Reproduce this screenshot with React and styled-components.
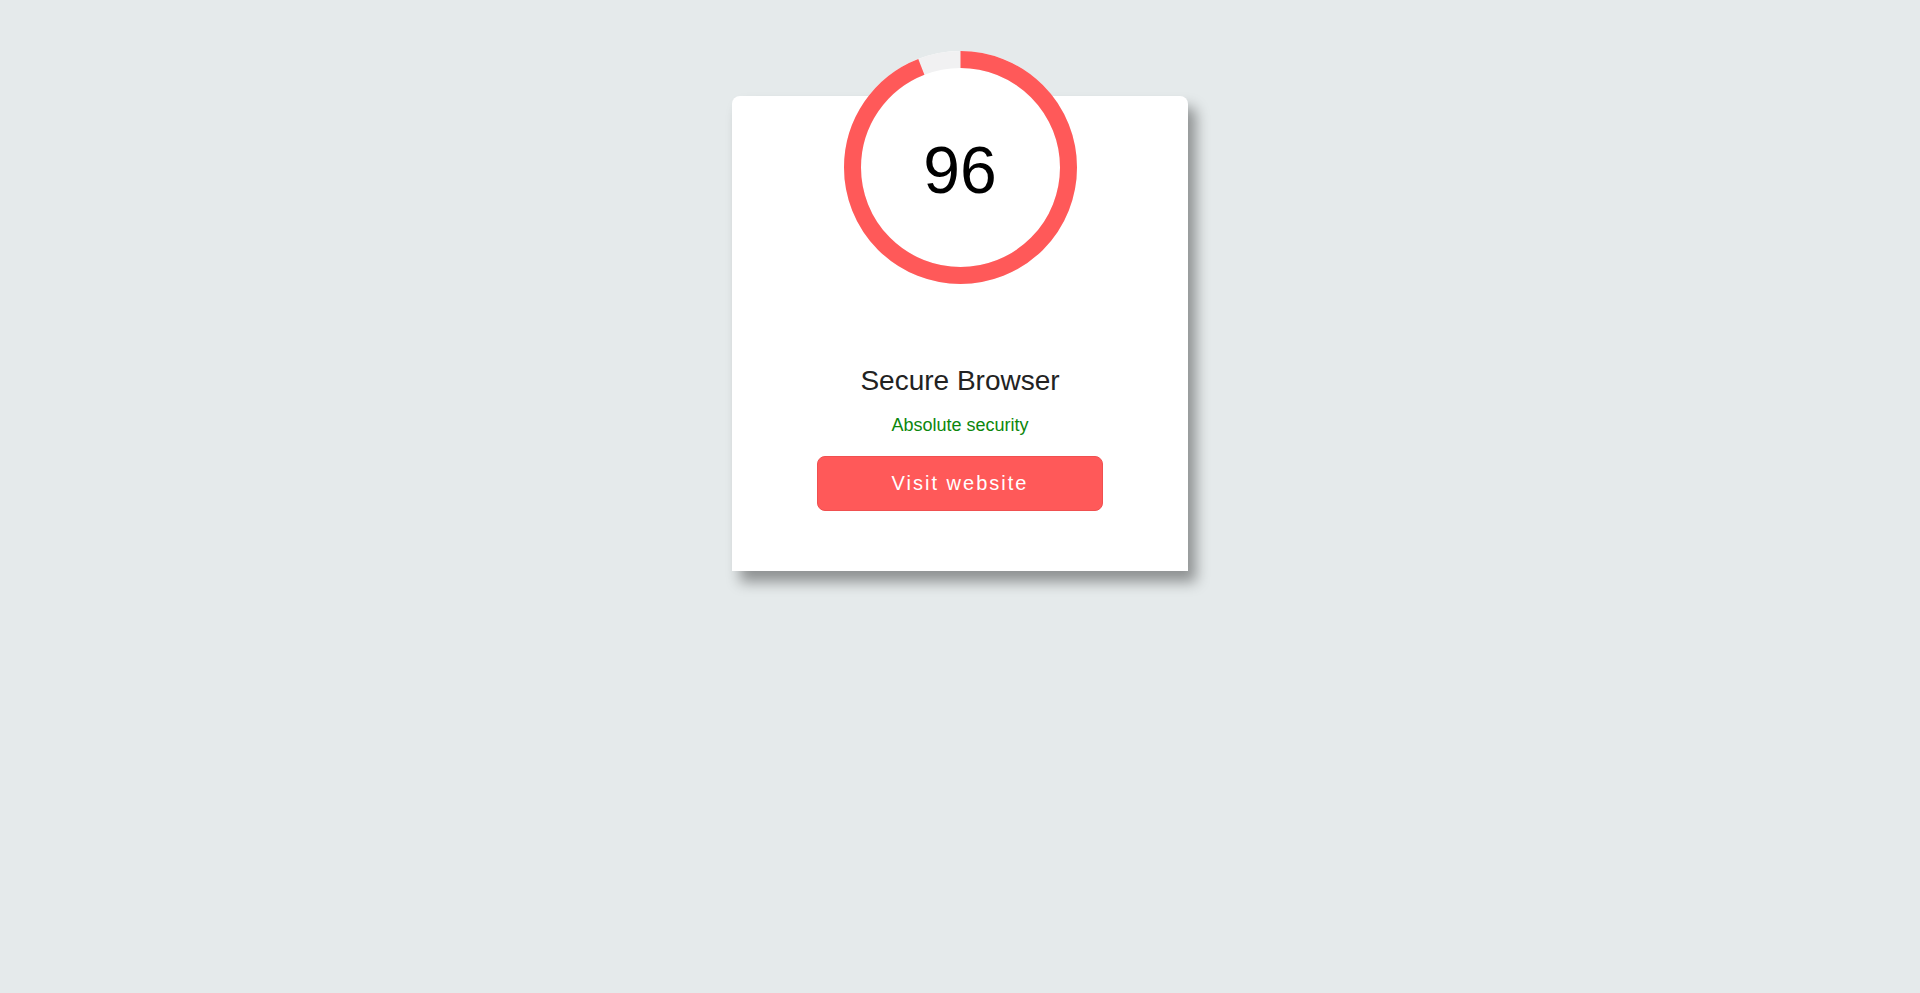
import React from 'react'
import styled, { createGlobalStyle } from 'styled-components'

const GlobalStyle = createGlobalStyle`
  html, body {
    margin: 0;
    padding: 0;
    background: #e5eaeb;
    font-family: "Liberation Sans", Arial, sans-serif;
  }
`;

const SIZE = 233;
const STROKE = 17;
const R = (SIZE - STROKE) / 2;
const C = 2 * Math.PI * R;

// the arc is drawn a little shorter than the score, as in the original widget
const arcFor = (value) => (C * (value - 2)) / 100;

const Gauge = ({ value }) => (
  <GaugeWrap>
    <svg width={SIZE} height={SIZE} viewBox={`0 0 ${SIZE} ${SIZE}`}>
      <circle cx={SIZE / 2} cy={SIZE / 2} r={R + STROKE / 2} fill="#fff" />
      <circle cx={SIZE / 2} cy={SIZE / 2} r={R} fill="none" stroke="#f1f1f2" strokeWidth={STROKE} />
      <circle
        cx={SIZE / 2}
        cy={SIZE / 2}
        r={R}
        fill="none"
        stroke="#ff5959"
        strokeWidth={STROKE}
        strokeDasharray={`${arcFor(value)} ${C}`}
        transform={`rotate(-90 ${SIZE / 2} ${SIZE / 2})`}
      />
    </svg>
    <Score>{value}</Score>
  </GaugeWrap>
);

const App = () => {
  return (
    <Page>
      <GlobalStyle />
      <Card>
        <Gauge value={96} />
        <Title>Secure Browser</Title>
        <Subtitle>Absolute security</Subtitle>
        <VisitButton>Visit website</VisitButton>
      </Card>
    </Page>
  )
};

const Page = styled.div`
  min-height: 993px;
  display: flex;
  justify-content: center;
  align-items: flex-start;
  padding-top: 96px;
  box-sizing: border-box;
`;

const Card = styled.div`
  width: 456px;
  height: 475px;
  box-sizing: border-box;
  background: #fff;
  border-radius: 8px 8px 0 0;
  box-shadow: 8px 11px 14px rgba(0, 0, 0, 0.38);
  display: flex;
  flex-direction: column;
  align-items: center;
`;

const GaugeWrap = styled.div`
  position: relative;
  width: 233px;
  height: 233px;
  margin-top: -45px;

  svg {
    display: block;
  }
`;

const Score = styled.div`
  position: absolute;
  inset: 0;
  display: flex;
  align-items: center;
  justify-content: center;
  font-size: 66px;
  color: #000;
  padding-top: 4px;
`;

const Title = styled.h2`
  margin: 81px 0 0;
  font-size: 28px;
  font-weight: normal;
  color: #222;
  line-height: normal;
`;

const Subtitle = styled.p`
  margin: 18px 0 0;
  font-size: 18px;
  color: #0c870c;
  line-height: normal;
`;

const VisitButton = styled.a`
  margin-top: 20px;
  width: 286px;
  height: 55px;
  box-sizing: border-box;
  display: flex;
  align-items: center;
  justify-content: center;
  background: #ff5959;
  border: 1px solid #f05050;
  border-radius: 8px;
  color: #fff;
  font-size: 20px;
  letter-spacing: 2px;
  cursor: pointer;

  &:hover {
    background: #ff4a4a;
  }
`;

export default App
